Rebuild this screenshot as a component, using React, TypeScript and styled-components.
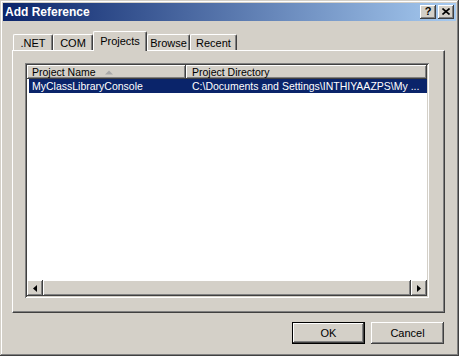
import React from 'react';
import styled, { createGlobalStyle } from 'styled-components';

const face = '#d4d0c8';

const GlobalStyle = createGlobalStyle`
  body {
    margin: 0;
    background: ${face};
    font-family: "Liberation Sans", Arial, sans-serif;
    font-size: 11px;
    color: #000;
  }
`;

const raised = `
  box-shadow: inset -1px -1px #404040, inset 1px 1px #fff,
    inset -2px -2px #808080, inset 2px 2px ${face};
`;

const Window = styled.div`
  width: 459px;
  height: 356px;
  box-sizing: border-box;
  background: ${face};
  padding: 3px;
  display: flex;
  flex-direction: column;
  box-shadow: inset -1px -1px #404040, inset 1px 1px ${face},
    inset -2px -2px #808080, inset 2px 2px #fff;
`;

const TitleBar = styled.div`
  height: 18px;
  display: flex;
  align-items: center;
  justify-content: space-between;
  padding: 0 2px 0 2px;
  background: linear-gradient(to right, #0a246a, #a6caf0);
`;

const TitleText = styled.span`
  color: #fff;
  font-weight: bold;
  font-size: 12px;
`;

const CaptionButtons = styled.div`
  display: flex;
  gap: 2px;
`;

const CaptionButton = styled.div`
  width: 16px;
  height: 14px;
  box-sizing: border-box;
  background: ${face};
  display: flex;
  align-items: center;
  justify-content: center;
  font-weight: bold;
  font-size: 11px;
  line-height: 1;
  padding-bottom: 1px;
  ${raised}
`;

const Body = styled.div`
  flex: 1;
  display: flex;
  flex-direction: column;
  padding: 10px 0 0 9px;
`;

const TabStrip = styled.div`
  display: flex;
  align-items: flex-end;
  height: 19px;
  padding-left: 1px;
`;

const Tab = styled.div<{ $width: number; $active?: boolean }>`
  position: relative;
  z-index: ${(p) => (p.$active ? 1 : 0)};
  width: ${(p) => p.$width}px;
  height: ${(p) => (p.$active ? 20 : 16)}px;
  margin-bottom: ${(p) => (p.$active ? -1 : 0)}px;
  box-sizing: border-box;
  background: ${face};
  border-left: 1px solid #fff;
  border-top: 1px solid #fff;
  border-right: 1px solid #404040;
  border-radius: 2px 2px 0 0;
  box-shadow: inset -1px 0 #808080;
  display: flex;
  justify-content: center;
  padding-top: ${(p) => (p.$active ? 3 : 2)}px;
  line-height: 12px;
`;

const Panel = styled.div`
  width: 433px;
  height: 263px;
  box-sizing: border-box;
  border-top: 1px solid #fff;
  border-left: 1px solid #fff;
  border-right: 1px solid #404040;
  border-bottom: 1px solid #404040;
  box-shadow: inset -1px -1px #808080;
  padding: 12px 0 0 12px;
`;

const ListView = styled.div`
  width: 404px;
  height: 235px;
  box-sizing: border-box;
  background: #fff;
  padding: 2px;
  display: flex;
  flex-direction: column;
  font-size: 10.5px;
  box-shadow: inset 1px 1px #808080, inset -1px -1px #fff,
    inset 2px 2px #404040, inset -2px -2px ${face};
`;

const HeaderRow = styled.div`
  display: flex;
  height: 14px;
`;

const HeaderCell = styled.div<{ $width?: number }>`
  ${(p) => (p.$width ? `width: ${p.$width}px;` : 'flex: 1;')}
  box-sizing: border-box;
  background: ${face};
  display: flex;
  align-items: center;
  padding-left: ${(p) => (p.$width ? 5 : 6)}px;
  box-shadow: inset -1px -1px #404040, inset 1px 1px #fff,
    inset -2px -2px #808080;
  white-space: nowrap;
`;

const SortArrow = styled.svg`
  margin-left: 9px;
`;

const Rows = styled.div`
  flex: 1;
`;

const Row = styled.div<{ $selected?: boolean }>`
  display: flex;
  height: 14px;
  margin-left: 2px;
  align-items: center;
  background: ${(p) => (p.$selected ? '#0a246a' : 'transparent')};
  color: ${(p) => (p.$selected ? '#fff' : '#000')};
`;

const Cell = styled.div<{ $width?: number; $pad: number }>`
  ${(p) => (p.$width ? `width: ${p.$width}px;` : 'flex: 1;')}
  box-sizing: border-box;
  padding-left: ${(p) => p.$pad}px;
  white-space: nowrap;
`;

const ScrollBar = styled.div`
  display: flex;
  height: 16px;
`;

const ScrollButton = styled.div`
  width: 16px;
  height: 16px;
  box-sizing: border-box;
  background: ${face};
  display: flex;
  align-items: center;
  justify-content: center;
  ${raised}
`;

const ScrollThumb = styled.div`
  flex: 1;
  background: ${face};
  ${raised}
`;

const ButtonRow = styled.div`
  width: 433px;
  display: flex;
  justify-content: flex-end;
  gap: 6px;
  margin-top: 9px;
  padding-right: 1px;
  box-sizing: border-box;
`;

const Button = styled.div<{ $default?: boolean }>`
  width: 73px;
  height: 22px;
  box-sizing: border-box;
  background: ${face};
  display: flex;
  align-items: center;
  justify-content: center;
  box-shadow: ${(p) =>
    p.$default
      ? `inset 0 0 0 1px #000, inset -2px -2px #404040, inset 2px 2px #fff, inset -3px -3px #808080`
      : `inset -1px -1px #404040, inset 1px 1px #fff, inset -2px -2px #808080`};
`;

const tabs = [
  { label: '.NET', width: 40 },
  { label: 'COM', width: 40 },
  { label: 'Projects', width: 54, active: true },
  { label: 'Browse', width: 43 },
  { label: 'Recent', width: 47 },
];

const App: React.FC = () => {
  return (
    <>
      <GlobalStyle />
      <Window>
        <TitleBar>
          <TitleText>Add Reference</TitleText>
          <CaptionButtons>
            <CaptionButton>?</CaptionButton>
            <CaptionButton>
              <svg width="8" height="7" viewBox="0 0 8 7">
                <path d="M0.5 0.5 L7.5 6.5 M7.5 0.5 L0.5 6.5" stroke="#000" strokeWidth="1.6" />
              </svg>
            </CaptionButton>
          </CaptionButtons>
        </TitleBar>
        <Body>
          <TabStrip>
            {tabs.map((t) => (
              <Tab key={t.label} $width={t.width} $active={t.active}>
                {t.label}
              </Tab>
            ))}
          </TabStrip>
          <Panel>
            <ListView>
              <HeaderRow>
                <HeaderCell $width={159}>
                  Project Name
                  <SortArrow width="8" height="5" viewBox="0 0 8 5">
                    <path d="M0 4.5 L4 0.5 L8 4.5 Z" fill="#a8a8a8" />
                  </SortArrow>
                </HeaderCell>
                <HeaderCell>Project Directory</HeaderCell>
              </HeaderRow>
              <Rows>
                <Row $selected>
                  <Cell $width={157} $pad={3}>MyClassLibraryConsole</Cell>
                  <Cell $pad={6}>C:\Documents and Settings\INTHIYAAZPS\My ...</Cell>
                </Row>
              </Rows>
              <ScrollBar>
                <ScrollButton>
                  <svg width="4" height="7" viewBox="0 0 4 7">
                    <path d="M4 0 L0 3.5 L4 7 Z" fill="#000" />
                  </svg>
                </ScrollButton>
                <ScrollThumb />
                <ScrollButton>
                  <svg width="4" height="7" viewBox="0 0 4 7">
                    <path d="M0 0 L4 3.5 L0 7 Z" fill="#000" />
                  </svg>
                </ScrollButton>
              </ScrollBar>
            </ListView>
          </Panel>
          <ButtonRow>
            <Button $default>OK</Button>
            <Button>Cancel</Button>
          </ButtonRow>
        </Body>
      </Window>
    </>
  );
};

export default App;
